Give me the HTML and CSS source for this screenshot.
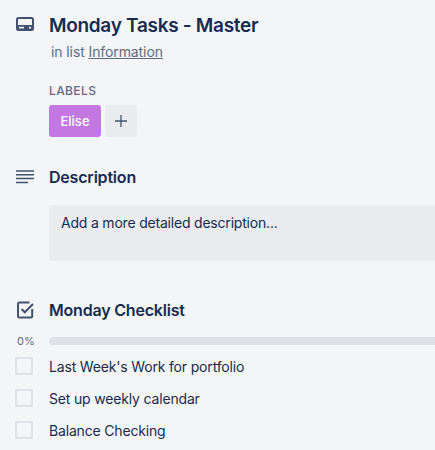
FILE: index.html
```html
<!DOCTYPE html>
<html lang="en">
<head>
<meta charset="utf-8">
<title>Monday Tasks - Master</title>
<link rel="stylesheet" href="styles.css">
</head>
<body>
<main class="card">
  <section class="section head">
    <svg class="icon" viewBox="0 0 18 14" width="18" height="14"><path fill-rule="evenodd" d="M2.5 0h13A2.5 2.5 0 0 1 18 2.500v9a2.500 2.500 0 0 1-2.500 2.500h-13A2.500 2.500 0 0 1 0 11.500v-9A2.500 2.500 0 0 1 2.500 0zM2.500 2a.5.5 0 0 0-.5.5V8h14V2.500a.5.5 0 0 0-.5-.5zM3 9.800v1.800h5V9.800zM13 9.800v1.800h2V9.800z" fill="#42526e"/></svg>
    <div class="body">
      <h1 class="title">Monday Tasks - Master</h1>
      <p class="sub">in list <a class="link">Information</a></p>
      <h3 class="caps">LABELS</h3>
      <div class="labels">
        <span class="label">Elise</span>
        <span class="add"><svg viewBox="0 0 12 12" width="12" height="12"><path d="M6 0v12M0 6h12" stroke="#42526e" stroke-width="1.300" fill="none"/></svg></span>
      </div>
    </div>
  </section>
  <section class="section desc">
    <svg class="icon" viewBox="0 0 18 14" width="18" height="14"><path d="M0 1h18M0 4.800h18M0 8.600h18M0 12.400h12" stroke="#42526e" stroke-width="1.500" fill="none"/></svg>
    <div class="body">
      <h2 class="heading">Description</h2>
      <div class="descbox">Add a more detailed description...</div>
    </div>
  </section>
  <section class="section check">
    <svg class="icon" viewBox="0 0 18 18" width="18" height="18"><path d="M16.200 8v7a1.500 1.500 0 0 1-1.500 1.500H3.500A1.500 1.500 0 0 1 2 15V3a1.500 1.500 0 0 1 1.500-1.500h10" fill="none" stroke="#42526e" stroke-width="2"/><path d="M5.500 8l3.300 3.300L17 3" fill="none" stroke="#42526e" stroke-width="2"/></svg>
    <div class="body">
      <h2 class="heading">Monday Checklist</h2>
    </div>
  </section>
  <div class="progress">
    <span class="pct">0%</span>
    <div class="bar"></div>
  </div>
  <ul class="items">
    <li class="item"><span class="box"></span>Last Week's Work for portfolio</li>
    <li class="item"><span class="box"></span>Set up weekly calendar</li>
    <li class="item"><span class="box"></span>Balance Checking</li>
  </ul>
</main>
</body>
</html>
```
FILE: styles.css
```css
* { box-sizing: border-box; }
html, body { margin: 0; height: 100%; }
body {
  background: #f4f5f7;
  font-family: Inter, "Liberation Sans", sans-serif;
  color: #172b4d;
  overflow: hidden;
}
.card { padding: 16px 0 0 16px; }
.section { display: flex; align-items: flex-start; gap: 15px; }
.icon { flex: none; display: block; }
.head .icon { margin-top: 1px; }
.body { flex: 1; min-width: 0; }
.title { margin: 0; font-size: 19px; line-height: 20px; font-weight: 600; letter-spacing: -.3px; }
.sub { margin: 6px 0 0; font-size: 14px; line-height: 20px; color: #5e6c84; padding-left: 2px; letter-spacing: -.1px; }
.link { color: #5e6c84; text-decoration: underline; }
.caps { margin: 21px 0 0; font-size: 12px; line-height: 16px; font-weight: 500; letter-spacing: .4px; color: #5e6c84; }
.labels { display: flex; gap: 4px; margin-top: 6px; }
.label { width: 52px; height: 32px; border-radius: 3px; background: #c377e0; color: #fff; font-size: 13px; font-weight: 500; line-height: 32px; text-align: center; }
.add { width: 32px; height: 32px; border-radius: 3px; background: #ebecf0; display: flex; align-items: center; justify-content: center; }
.desc { margin-top: 30px; }
.desc .icon { margin-top: 3px; }
.heading { margin: 0; font-size: 16px; line-height: 20px; font-weight: 600; letter-spacing: -.2px; }
.descbox { margin-top: 18px; height: 56px; background: #ebecf0; border-radius: 3px 0 0 3px; padding: 8px 12px; font-size: 14px; line-height: 20px; letter-spacing: -.2px; }
.check { margin-top: 39px; }
.check .icon { margin-top: 1px; }
.progress { display: flex; align-items: center; margin-top: 13px; height: 16px; }
.pct { width: 33px; font-size: 11px; line-height: 16px; color: #5e6c84; padding-left: 1px; }
.bar { flex: 1; height: 8px; background: #dfe1e6; border-radius: 4px 0 0 4px; }
.items { list-style: none; margin: 1px 0 0; padding: 0; }
.item { display: flex; align-items: center; height: 32px; font-size: 14px; margin-left: -1px; letter-spacing: -.17px; }
.box { width: 18px; height: 18px; margin-right: 16px; background: #f4f5f7; border: 2px solid #dfe1e6; border-radius: 2px; flex: none; }
```
